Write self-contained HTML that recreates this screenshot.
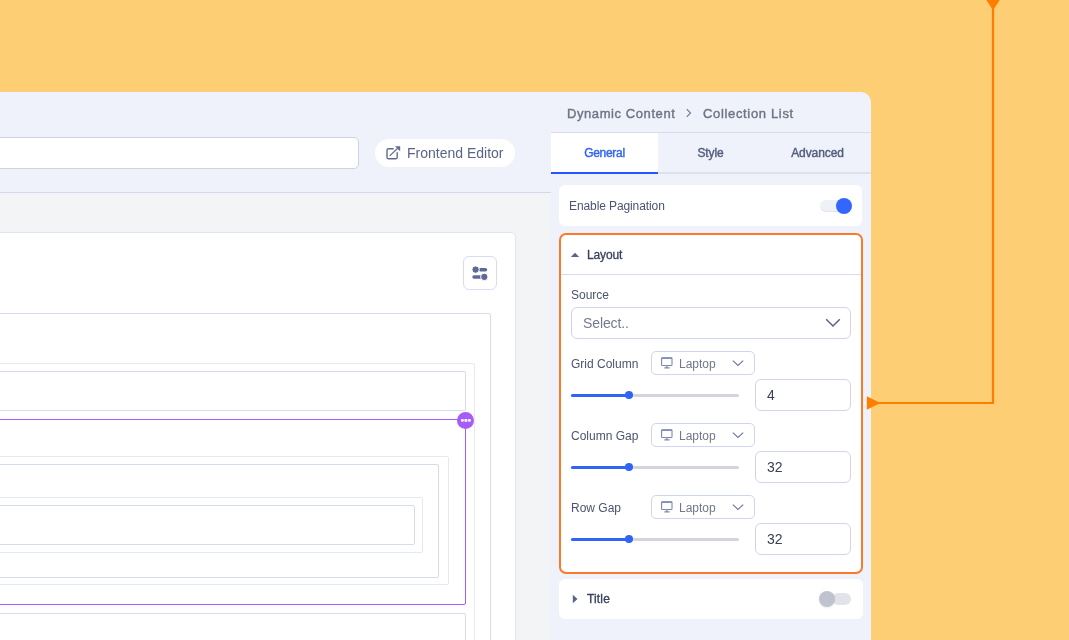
<!DOCTYPE html>
<html><head><meta charset="utf-8">
<style>
*{box-sizing:border-box;margin:0;padding:0}
html,body{width:1069px;height:640px;overflow:hidden}
body{background:#FECE74;font-family:"Liberation Sans",sans-serif;position:relative}
.a{position:absolute}
.t{position:absolute;white-space:nowrap;will-change:transform}
.t12{font-size:12px;line-height:12px}
.t13{font-size:13px;line-height:13px}
.t14{font-size:14px;line-height:14px}
.med{-webkit-text-stroke:0.4px currentColor}
.bx{position:absolute;border:1px solid #D6DBEE;border-radius:2px}
.bxl{position:absolute;border:1px solid #E6E8F3;border-radius:2px}
.lbl{color:#4C546F;letter-spacing:0px}
.dd{position:absolute;left:651px;width:104px;height:24px;border:1px solid #CFD5EE;border-radius:5px;background:#fff}
.num{position:absolute;left:755px;width:96px;height:32px;border:1px solid #CFD5EE;border-radius:6px;background:#fff}
.track{position:absolute;left:571px;width:168px;height:3px;background:#D4D5DA;border-radius:2px}
.fill{position:absolute;left:0;top:0;width:58px;height:3px;background:#2F64F5;border-radius:2px}
.knob{position:absolute;left:54px;top:-2.5px;width:8px;height:8px;background:#2F64F5;border-radius:50%}
</style></head><body>
<!-- window background -->
<div class="a" style="left:-20px;top:92px;width:891px;height:600px;background:#EFF2FB;border-top-right-radius:10px"></div>
<!-- header line -->
<div class="a" style="left:0;top:192px;width:551px;height:1px;background:#D3D8EC"></div>
<!-- canvas -->
<div class="a" style="left:0;top:193px;width:551px;height:447px;background:#F3F4F6"></div>
<!-- url input -->
<div class="a" style="left:-10px;top:137px;width:369px;height:32px;background:#fff;border:1px solid #CCD2EA;border-radius:5px"></div>
<!-- frontend editor pill -->
<div class="a" style="left:375px;top:139px;width:140px;height:28px;background:#fff;border-radius:14px">
<svg class="a" style="left:10px;top:7px" width="16" height="16" viewBox="0 0 16 16"><path d="M8.7 2.8H3.6Q2 2.8 2 4.4V11.2Q2 12.8 3.6 12.8H10.6Q12.2 12.8 12.2 11.2V6.2" fill="none" stroke="#626B8E" stroke-width="1.4"/><path d="M4.7 9.9L13.2 1.8" stroke="#626B8E" stroke-width="1.2"/><path d="M10 0.2H15.2V5.2Z" fill="#626B8E"/></svg>
<div class="t t14" style="left:32px;top:7px;color:#5B6486;letter-spacing:0px">Frontend Editor</div>
</div>
<!-- card -->
<div class="a" style="left:-10px;top:232px;width:526px;height:460px;background:#fff;border:1px solid #E4E5EA;border-radius:5px"></div>
<div class="a" style="left:463px;top:256px;width:34px;height:34px;border:1.5px solid #D8DCF1;border-radius:6px;background:#fff"></div>
<svg class="a" style="left:0;top:0;overflow:visible" width="1" height="1"><rect x="478.6" y="267.9" width="8.6" height="3.5" rx="1.75" fill="#5F6A94"/><circle cx="475.6" cy="269.6" r="3.7" fill="#5F6A94" stroke="#fff" stroke-width="1"/><rect x="472.3" y="275.3" width="10" height="3.5" rx="1.75" fill="#5F6A94"/><circle cx="484.3" cy="276.9" r="3.7" fill="#5F6A94" stroke="#fff" stroke-width="1"/></svg>
<div class="bx" style="left:-10px;top:313px;width:501px;height:400px"></div>
<div class="bxl" style="left:-10px;top:363px;width:485px;height:400px"></div>
<div class="bx" style="left:-10px;top:371px;width:476px;height:40px"></div>
<div class="bxl" style="left:-10px;top:456px;width:459px;height:129px"></div>
<div class="bx" style="left:-10px;top:464px;width:449px;height:114px"></div>
<div class="bxl" style="left:-10px;top:497px;width:433px;height:56px"></div>
<div class="bx" style="left:-10px;top:505px;width:425px;height:40px"></div>
<div class="bx" style="left:-10px;top:613px;width:476px;height:100px"></div>
<div class="a" style="left:-10px;top:419px;width:476px;height:186px;border:1.3px solid #A75CF9;border-radius:2px"></div>
<svg class="a" style="left:0;top:0;overflow:visible" width="1" height="1"><circle cx="465.5" cy="420.5" r="8.5" fill="#A75CF9"/><rect x="461" y="419" width="2.8" height="2.8" rx="1.1" fill="#fff"/><rect x="464.5" y="419" width="2.8" height="2.8" rx="0.6" fill="#fff"/><rect x="468" y="419" width="2.8" height="2.8" rx="1.1" fill="#fff"/></svg>

<!-- right panel -->
<div class="t t13 med" style="left:567px;top:107px;color:#6E7484;letter-spacing:0.58px">Dynamic Content</div>
<svg class="a" style="left:684px;top:107px" width="10" height="12" viewBox="0 0 10 12"><path d="M2.7 2.2L6.5 6L2.7 9.8" fill="none" stroke="#717B9E" stroke-width="1.15"/></svg>
<div class="t t13 med" style="left:703px;top:107px;color:#6E7484;letter-spacing:0.66px">Collection List</div>
<div class="a" style="left:551px;top:132px;width:320px;height:1px;background:#D6DBEE"></div>
<div class="a" style="left:551px;top:172px;width:320px;height:2px;background:#DDE1EE"></div>
<div class="a" style="left:551px;top:133px;width:107px;height:39px;background:#fff"></div>
<div class="a" style="left:551px;top:172px;width:107px;height:2px;background:#2457FF"></div>
<div class="t t12 med" style="left:551px;top:147px;width:107px;text-align:center;color:#2F64F5;letter-spacing:-0.3px">General</div>
<div class="t t12 med" style="left:657px;top:147px;width:107px;text-align:center;color:#535C7B;letter-spacing:-0.1px">Style</div>
<div class="t t12 med" style="left:764px;top:147px;width:107px;text-align:center;color:#535C7B;letter-spacing:-0.1px">Advanced</div>

<div class="a" style="left:559px;top:185px;width:303px;height:41px;background:#fff;border-radius:6px"></div>
<div class="t t12 lbl" style="left:569px;top:200px;letter-spacing:-0.1px">Enable Pagination</div>
<div class="a" style="left:820px;top:200px;width:30px;height:11.5px;border-radius:6px;background:#EEF1F7;box-shadow:inset 0 -1px 1px rgba(0,0,0,0.05)"></div>
<div class="a" style="left:836px;top:198px;width:16px;height:16px;border-radius:50%;background:#3366FF"></div>

<div class="a" style="left:559px;top:233px;width:304px;height:341px;background:#fff;border:2px solid #FA7A2B;border-radius:7px"></div>
<div class="a" style="left:561px;top:274px;width:300px;height:1px;background:#D6DBEE"></div>
<svg class="a" style="left:570px;top:252px" width="10" height="6" viewBox="0 0 10 6"><path d="M0.8 5L5 0.8L9.2 5Z" fill="#5B6486"/></svg>
<div class="t t12" style="left:587px;top:249px;color:#3A4160;letter-spacing:-0.15px;-webkit-text-stroke:0.3px #3A4160">Layout</div>

<div class="t t12 lbl" style="left:571px;top:289px">Source</div>
<div class="a" style="left:571px;top:307px;width:280px;height:32px;border:1px solid #CFD5EE;border-radius:6px;background:#fff"></div>
<div class="t" style="left:582.5px;top:316px;font-size:14px;line-height:14px;color:#737A8D;letter-spacing:-0.1px">Select..</div>
<svg class="a" style="left:824px;top:316px" width="18" height="14" viewBox="0 0 18 14"><path d="M2.2 3.2L9 10L15.8 3.2" fill="none" stroke="#5B6486" stroke-width="1.5"/></svg>

<div class="t t12 lbl" style="left:571px;top:358px">Grid Column</div>
<div class="dd" style="top:351px"><svg class="a" style="left:8.4px;top:4px" width="14" height="13" viewBox="0 0 14 13"><rect x="1.6" y="1.9" width="10.4" height="7.6" rx="0.6" fill="none" stroke="#7E88AD" stroke-width="1.1"/><path d="M1.6 2.2H12" stroke="#7E88AD" stroke-width="1.3"/><path d="M4.3 11.8H9.5M6.9 9.5V11.8" stroke="#7E88AD" stroke-width="1.2"/></svg><div class="t t12" style="left:27px;top:6px;color:#73788A">Laptop</div><svg class="a" style="left:79px;top:7px" width="14" height="8" viewBox="0 0 14 8"><path d="M1.8 1.6L7 6.4L12.2 1.6" fill="none" stroke="#6F79A0" stroke-width="1.15"/></svg></div>
<div class="track" style="top:393.5px"><div class="fill"></div><div class="knob"></div></div>
<div class="num" style="top:379px"><div class="t t14" style="left:11px;top:8px;color:#3A4053">4</div></div>

<div class="t t12 lbl" style="left:571px;top:430px">Column Gap</div>
<div class="dd" style="top:423px"><svg class="a" style="left:8.4px;top:4px" width="14" height="13" viewBox="0 0 14 13"><rect x="1.6" y="1.9" width="10.4" height="7.6" rx="0.6" fill="none" stroke="#7E88AD" stroke-width="1.1"/><path d="M1.6 2.2H12" stroke="#7E88AD" stroke-width="1.3"/><path d="M4.3 11.8H9.5M6.9 9.5V11.8" stroke="#7E88AD" stroke-width="1.2"/></svg><div class="t t12" style="left:27px;top:6px;color:#73788A">Laptop</div><svg class="a" style="left:79px;top:7px" width="14" height="8" viewBox="0 0 14 8"><path d="M1.8 1.6L7 6.4L12.2 1.6" fill="none" stroke="#6F79A0" stroke-width="1.15"/></svg></div>
<div class="track" style="top:465.5px"><div class="fill"></div><div class="knob"></div></div>
<div class="num" style="top:451px"><div class="t t14" style="left:11px;top:8px;color:#3A4053">32</div></div>

<div class="t t12 lbl" style="left:571px;top:502px">Row Gap</div>
<div class="dd" style="top:495px"><svg class="a" style="left:8.4px;top:4px" width="14" height="13" viewBox="0 0 14 13"><rect x="1.6" y="1.9" width="10.4" height="7.6" rx="0.6" fill="none" stroke="#7E88AD" stroke-width="1.1"/><path d="M1.6 2.2H12" stroke="#7E88AD" stroke-width="1.3"/><path d="M4.3 11.8H9.5M6.9 9.5V11.8" stroke="#7E88AD" stroke-width="1.2"/></svg><div class="t t12" style="left:27px;top:6px;color:#73788A">Laptop</div><svg class="a" style="left:79px;top:7px" width="14" height="8" viewBox="0 0 14 8"><path d="M1.8 1.6L7 6.4L12.2 1.6" fill="none" stroke="#6F79A0" stroke-width="1.15"/></svg></div>
<div class="track" style="top:537.5px"><div class="fill"></div><div class="knob"></div></div>
<div class="num" style="top:523px"><div class="t t14" style="left:11px;top:8px;color:#3A4053">32</div></div>

<div class="a" style="left:559px;top:579px;width:304px;height:40px;background:#fff;border-radius:6px"></div>
<svg class="a" style="left:572px;top:594px" width="6" height="10" viewBox="0 0 6 10"><path d="M0.8 0.8L5.5 5L0.8 9.2Z" fill="#5B6486"/></svg>
<div class="t t12" style="left:587px;top:593px;color:#3A4160;-webkit-text-stroke:0.35px #3A4160;letter-spacing:0.15px">Title</div>
<div class="a" style="left:832px;top:593px;width:19px;height:11.5px;border-radius:6px;background:#E1E3E8"></div>
<div class="a" style="left:819px;top:591px;width:16px;height:16px;border-radius:50%;background:#BFC3CE;box-shadow:0 1px 2px rgba(0,0,0,0.08)"></div>

<!-- connector -->
<svg class="a" style="left:0;top:0" width="1069" height="640" viewBox="0 0 1069 640">
<path d="M993 6V403H877" fill="none" stroke="#FF7E00" stroke-width="2.2"/>
<path d="M986.3 0H999.7L993 10.2Z" fill="#FF7E00"/>
<path d="M866.8 396.2L880.5 403L866.8 409.8Z" fill="#FF7E00"/>
</svg>
</body></html>
